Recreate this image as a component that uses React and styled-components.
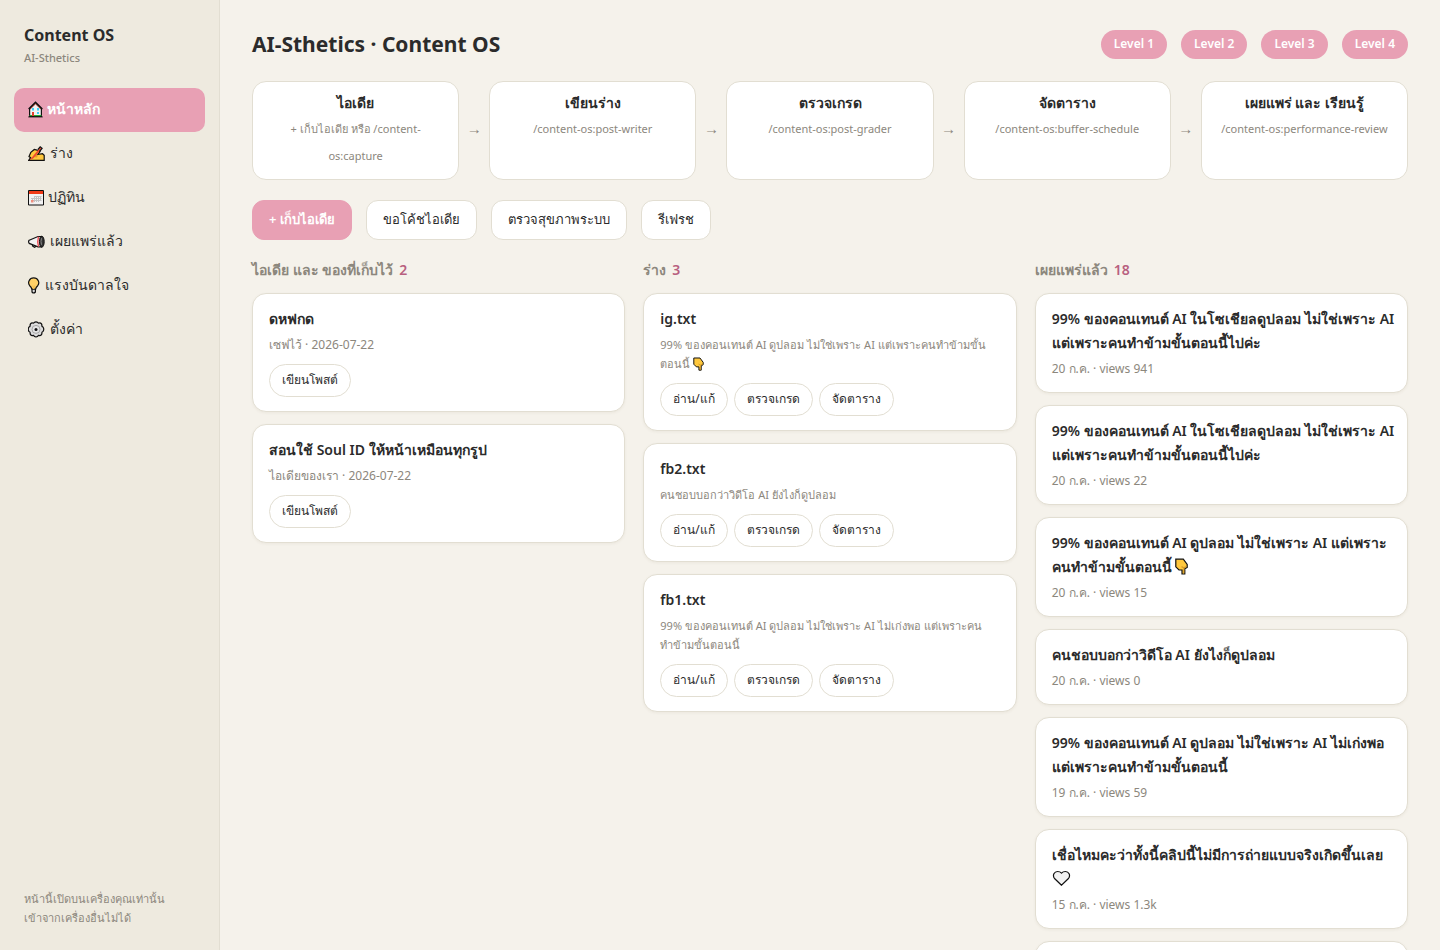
import React from 'react';
import styled, { createGlobalStyle, css } from 'styled-components';

const GlobalStyle = createGlobalStyle`
    * {
        box-sizing: border-box;
    }

    body {
        margin: 0;
        background: #f5f2eb;
        color: #2b2b2b;
        font-family: "Noto Sans", "Open Sans", sans-serif;
        font-size: 15px;
        line-height: 24px;
    }

    button {
        font-family: inherit;
        color: inherit;
        cursor: pointer;
    }
`

const Layout = styled.div`
    display: flex;
    height: 100vh;
    overflow: hidden;
`

const Sidebar = styled.aside`
    display: flex;
    flex-direction: column;
    flex: 0 0 220px;
    padding: 22px 14px;
    background: #eeeadf;
    border-right: 1px solid #e2ded2;
`

const Brand = styled.div`
    padding: 0 10px;
    margin-bottom: 20px;
`

const BrandName = styled.div`
    font-size: 16px;
    font-weight: 700;
    line-height: 26px;
`

const BrandSub = styled.div`
    font-size: 11px;
    font-weight: 500;
    line-height: 20px;
    color: #8c877d;
`

const Nav = styled.nav`
    display: flex;
    flex-direction: column;
`

const NavLink = styled.a`
    display: flex;
    align-items: center;
    gap: 4px;
    height: 44px;
    padding: 0 14px 2px;
    border-radius: 10px;
    font-size: 14px;
    color: #2b2b2b;
    text-decoration: none;
    white-space: nowrap;

    ${props => props.$active && css`
        background: #e8a0b4;
        color: #fff;
        font-weight: 600;
    `}
`

const SideNote = styled.p`
    margin: auto 0 0;
    padding: 0 10px 1px;
    font-size: 11px;
    line-height: 19px;
    color: #8c877d;
    white-space: nowrap;
`

const Main = styled.main`
    flex: 1;
    min-width: 0;
    padding: 28px 32px;
    overflow-y: auto;
    scrollbar-width: none;
`

const TopBar = styled.header`
    display: flex;
    align-items: center;
    justify-content: space-between;
    margin-bottom: 20px;
`

const PageTitle = styled.h1`
    margin: 0;
    font-size: 21px;
    font-weight: 700;
    line-height: 33px;
`

const Levels = styled.div`
    display: flex;
    gap: 14px;
`

const Level = styled.span`
    padding: 0 13px 1px;
    border-radius: 15px;
    background: #e8a0b4;
    color: #fff;
    font-size: 12px;
    font-weight: 600;
    line-height: 28px;
`

const Flow = styled.section`
    display: flex;
    margin-bottom: 20px;
`

const Step = styled.div`
    flex: 1 1 0;
    min-width: 0;
    padding: 9px 14px 10px;
    background: #fff;
    border: 1px solid #e2ded2;
    border-radius: 14px;
    text-align: center;
`

const StepTitle = styled.div`
    margin-bottom: 1px;
    font-size: 14px;
    font-weight: 600;
    line-height: 23px;
`

const StepCommand = styled.div`
    font-size: 11px;
    line-height: 27px;
    color: #8c877d;
`

const Arrow = styled.span`
    display: flex;
    align-items: center;
    justify-content: center;
    flex: 0 0 30px;
    padding-bottom: 5px;
    color: #8c877d;
`

const Actions = styled.div`
    display: flex;
    gap: 14px;
    margin-bottom: 18px;
`

const ActionBtn = styled.button`
    height: 40px;
    padding: 0 16px 2px;
    background: #fff;
    border: 1px solid #e2ded2;
    border-radius: 12px;
    font-size: 13px;

    ${props => props.$primary && css`
        background: #e8a0b4;
        border-color: #e8a0b4;
        color: #fff;
        font-weight: 600;
    `}
`

const Board = styled.div`
    display: grid;
    grid-template-columns: repeat(3, minmax(0, 1fr));
    gap: 18px;
    align-items: start;
`

const Column = styled.section`
    display: flex;
    flex-direction: column;
    gap: 12px;
`

const ColumnTitle = styled.h2`
    margin: 0;
    font-size: 14px;
    font-weight: 600;
    line-height: 23px;
    color: #8c877d;
`

const Count = styled.span`
    margin-left: 6px;
    color: #b8607f;
`

const Card = styled.article`
    min-height: 76px;
    padding: 13px 16px 14px;
    background: #fff;
    border: 1px solid #e2ded2;
    border-radius: 14px;
    box-shadow: 0 1px 3px rgba(80, 70, 40, 0.06);
`

const CardTitle = styled.h3`
    margin: 0 0 4px;
    font-size: 14px;
    font-weight: 600;
    line-height: 24px;
    white-space: nowrap;
`

const Meta = styled.p`
    margin: 0;
    font-size: ${props => props.$excerpt ? '11px' : '12px'};
    line-height: 19px;
    color: #8c877d;
`

const Pills = styled.div`
    display: flex;
    gap: 6px;
    margin-top: 10px;
`

const Pill = styled.button`
    height: 33px;
    padding: 0 12px 2px;
    background: #fff;
    border: 1px solid #e2ded2;
    border-radius: 17px;
    font-size: 12px;
`

const Glyph = styled.svg`
    flex: none;
    vertical-align: -3px;
`

const HomeIcon = () => (
    <Glyph width="15" height="17" viewBox="0 0 15 17" aria-hidden="true">
        <path d="M1.600 8v7.500h11.800V8L7.500 2z" fill="#f4f4f4" stroke="#111" strokeWidth="1.200" />
        <path d="M.600 8 7.500 1.200 14.400 8" fill="none" stroke="#111" strokeWidth="1.300" />
        <path d="M2.300 7.800 7.500 2.800l5.200 5" fill="none" stroke="#a8392c" strokeWidth="1" />
        <path d="M4 7h2v2.500H4zM9 7h2v2.500H9zM9 11h2v2H9z" fill="#3fd0f5" />
        <path d="M4 11h2v4H4z" fill="#e0402c" />
        <path d="M1.500 14.700h2.500M6 14.700h7.500" stroke="#25a833" strokeWidth="1.200" />
        <path d="M.300 15.900h14.400" stroke="#111" strokeWidth="1" />
    </Glyph>
)

const WriteIcon = () => (
    <Glyph width="18" height="17" viewBox="0 0 18 17" aria-hidden="true">
        <path d="M.700 15.300 2.600 12.700 1 11.500 2.800 7.400 6.300 4.500 10 5.300 12 6.700 9.800 9.500 14.500 8.700 16.200 10.300V15.300z" fill="#ffc83d" stroke="#111" strokeWidth="1.200" />
        <path d="M5 12 7.500 9l2.500 1-1 2.500z" fill="#e39d24" />
        <path d="M1.500 15.200 4 12.300 12.300 2.300l1.500 1.200-8.600 9.900z" fill="#ef4b30" />
        <path d="M10 4.500 12.200 1.800l1.900 1.500-2.600 3.200" fill="none" stroke="#111" strokeWidth="1.200" />
    </Glyph>
)

const CalendarIcon = () => (
    <Glyph width="16" height="17" viewBox="0 0 16 17" aria-hidden="true">
        <path d="M.500 1.500h15v14.500H.500z" fill="#f2f2f2" stroke="#111" />
        <path d="M1 2h14v3H1z" fill="#f03a17" />
        <path d="M6 7.500h7.500M3 9.500h10.500M3 11.500h10.500M6.500 7v6M8.500 7v6M10.500 7v6M12.500 7v4.500M4.500 9v4" stroke="#c2c2c2" strokeWidth="1" />
        <path d="M3 11h2.500v2.500H3z" fill="#f0907e" />
    </Glyph>
)

const MegaphoneIcon = () => (
    <Glyph width="18" height="17" viewBox="0 0 18 17" aria-hidden="true">
        <path d="M4.500 11.500v1.500l2 1.200 1.800-1" fill="#ddd" stroke="#111" strokeWidth="1.200" />
        <path d="M1.200 7.200 10 3.500h3.500v10.400H10L1.200 10.400Q0 8.800 1.200 7.200z" fill="#f3f3f3" stroke="#111" strokeWidth="1.200" />
        <path d="M10.500 3.800q-1.500 5 0 9.800" fill="none" stroke="#ef5058" strokeWidth="1.400" />
        <ellipse cx="13.800" cy="8.700" rx="2.400" ry="5.500" fill="#333" stroke="#111" />
        <path d="M13.500 5.200q-1 3.200 0 6.600" fill="none" stroke="#888" />
    </Glyph>
)

const BulbIcon = () => (
    <Glyph width="13" height="17" viewBox="0 0 13 17" aria-hidden="true">
        <path d="M4 12v3q1.700 2 3.400 0v-3z" fill="#d9d9d9" stroke="#111" strokeWidth="1.200" />
        <path d="M3.700 12Q3.600 10.200 1.700 8.700C-.700 5.600 1.200.9 5.700.9s6.400 4.700 4 7.800Q7.800 10.200 7.700 12z" fill="#ffd167" stroke="#111" strokeWidth="1.200" />
        <path d="M4.800 8.500 5.700 12l.9-3.500" fill="none" stroke="#f4bd4c" />
    </Glyph>
)

const GearIcon = () => (
    <Glyph width="18" height="17" viewBox="0 0 18 17" aria-hidden="true">
        <path d="M6.200 1.500Q8 .200 9.800 1.500Q10.600 2.700 11.600 1.900Q13.900 2.200 13.900 4.200Q13.600 5.500 15 6Q16.500 8.300 15 10.500Q13.600 11 13.900 12.300Q13.900 14.400 11.600 14.700Q10.600 13.900 9.800 15.200Q8 16.500 6.200 15.200Q5.400 13.900 4.400 14.700Q2.100 14.400 2.100 12.300Q2.400 11 1 10.500Q-.500 8.300 1 6Q2.400 5.500 2.100 4.200Q2.100 2.200 4.400 1.900Q5.400 2.700 6.200 1.500z" fill="#dcdcdc" stroke="#111" strokeWidth="1.200" />
        <circle cx="8" cy="8.400" r="4" fill="#e4e4e4" stroke="#a5a5a5" />
        <circle cx="8" cy="8.400" r="1.500" fill="#111" />
    </Glyph>
)

const PointDownIcon = ({ small }) => (
    <Glyph width={small ? 11 : 13} height={small ? 14 : 17} viewBox="0 0 13 17" role="img" aria-label="👇">
        <path d="M.800 1.200H8.300L12.200 6.500V9.300L9.800 10.800V16H7V12H4L.800 8.800z" fill="#ffc83d" stroke="#111" strokeWidth="1.200" />
        <path d="M11.400 8.600 8.800 9.800 6.500 8.600" fill="none" stroke="#d59a27" strokeWidth="1.200" />
        <path d="M8.800 10v5.400" stroke="#d59a27" />
    </Glyph>
)

const HeartIcon = () => (
    <Glyph width="19" height="17" viewBox="0 0 19 17" role="img" aria-label="🤍">
        <path d="M9.500 15.200 2.800 8.800C-.200 5.300 2.500 1.500 5.500 1.500q2.600 0 4 1.600 1.400-1.600 4-1.600c3 0 5.700 3.800 2.700 7.300z" fill="#f2f2f2" stroke="#111" strokeWidth="1.200" />
    </Glyph>
)

const navItems = [
    { label: 'หน้าหลัก', Icon: HomeIcon, active: true },
    { label: 'ร่าง', Icon: WriteIcon },
    { label: 'ปฏิทิน', Icon: CalendarIcon },
    { label: 'เผยแพร่แล้ว', Icon: MegaphoneIcon },
    { label: 'แรงบันดาลใจ', Icon: BulbIcon },
    { label: 'ตั้งค่า', Icon: GearIcon },
]

const steps = [
    { title: 'ไอเดีย', command: <>+ เก็บไอเดีย หรือ /content-<br />os:capture</> },
    { title: 'เขียนร่าง', command: '/content-os:post-writer' },
    { title: 'ตรวจเกรด', command: '/content-os:post-grader' },
    { title: 'จัดตาราง', command: '/content-os:buffer-schedule' },
    { title: 'เผยแพร่ และ เรียนรู้', command: '/content-os:performance-review' },
]

const actions = ['+ เก็บไอเดีย', 'ขอโค้ชไอเดีย', 'ตรวจสุขภาพระบบ', 'รีเฟรช']

const ideas = [
    { title: 'ดหฟกด', meta: 'เซฟไว้ · 2026-07-22' },
    { title: 'สอนใช้ Soul ID ให้หน้าเหมือนทุกรูป', meta: 'ไอเดียของเรา · 2026-07-22' },
]

const drafts = [
    { title: 'ig.txt', excerpt: <>99% ของคอนเทนต์ AI ดูปลอม ไม่ใช่เพราะ AI แต่เพราะคนทำข้ามขั้น<br />ตอนนี้ <PointDownIcon small /></> },
    { title: 'fb2.txt', excerpt: 'คนชอบบอกว่าวิดีโอ AI ยังไงก็ดูปลอม' },
    { title: 'fb1.txt', excerpt: <>99% ของคอนเทนต์ AI ดูปลอม ไม่ใช่เพราะ AI ไม่เก่งพอ แต่เพราะคน<br />ทำข้ามขั้นตอนนี้</> },
]

const published = [
    { title: <>99% ของคอนเทนต์ AI ในโซเชียลดูปลอม ไม่ใช่เพราะ AI<br />แต่เพราะคนทำข้ามขั้นตอนนี้ไปค่ะ</>, meta: '20 ก.ค. · views 941' },
    { title: <>99% ของคอนเทนต์ AI ในโซเชียลดูปลอม ไม่ใช่เพราะ AI<br />แต่เพราะคนทำข้ามขั้นตอนนี้ไปค่ะ</>, meta: '20 ก.ค. · views 22' },
    { title: <>99% ของคอนเทนต์ AI ดูปลอม ไม่ใช่เพราะ AI แต่เพราะ<br />คนทำข้ามขั้นตอนนี้ <PointDownIcon /></>, meta: '20 ก.ค. · views 15' },
    { title: 'คนชอบบอกว่าวิดีโอ AI ยังไงก็ดูปลอม', meta: '20 ก.ค. · views 0' },
    { title: <>99% ของคอนเทนต์ AI ดูปลอม ไม่ใช่เพราะ AI ไม่เก่งพอ<br />แต่เพราะคนทำข้ามขั้นตอนนี้</>, meta: '19 ก.ค. · views 59' },
    { title: <>เชื่อไหมคะว่าทั้งนี้คลิปนี้ไม่มีการถ่ายแบบจริงเกิดขึ้นเลย<br /><HeartIcon /></>, meta: '15 ก.ค. · views 1.3k' },
]

const PostCard = ({ post, buttons }) => (
    <Card>
        <CardTitle>{post.title}</CardTitle>
        <Meta $excerpt={!!post.excerpt}>{post.excerpt || post.meta}</Meta>
        {buttons ?
            <Pills>
                {buttons.map(label => <Pill key={label} type="button">{label}</Pill>)}
            </Pills> : null}
    </Card>
)

const App = () => {
    return (
        <>
            <GlobalStyle />
            <Layout>
                <Sidebar>
                    <Brand>
                        <BrandName>Content OS</BrandName>
                        <BrandSub>AI-Sthetics</BrandSub>
                    </Brand>
                    <Nav>
                        {navItems.map(({ label, Icon, active }) => (
                            <NavLink key={label} href="#" $active={active}>
                                <Icon />
                                {label}
                            </NavLink>
                        ))}
                    </Nav>
                    <SideNote>หน้านี้เปิดบนเครื่องคุณเท่านั้น<br />เข้าจากเครื่องอื่นไม่ได้</SideNote>
                </Sidebar>
                <Main>
                    <TopBar>
                        <PageTitle>AI-Sthetics · Content OS</PageTitle>
                        <Levels>
                            {[1, 2, 3, 4].map(n => <Level key={n}>Level {n}</Level>)}
                        </Levels>
                    </TopBar>
                    <Flow>
                        {steps.map((step, i) => (
                            <React.Fragment key={step.title}>
                                {i > 0 ? <Arrow>→</Arrow> : null}
                                <Step>
                                    <StepTitle>{step.title}</StepTitle>
                                    <StepCommand>{step.command}</StepCommand>
                                </Step>
                            </React.Fragment>
                        ))}
                    </Flow>
                    <Actions>
                        {actions.map((label, i) => (
                            <ActionBtn key={label} type="button" $primary={i === 0}>{label}</ActionBtn>
                        ))}
                    </Actions>
                    <Board>
                        <Column>
                            <ColumnTitle>ไอเดีย และ ของที่เก็บไว้<Count>2</Count></ColumnTitle>
                            {ideas.map(post => <PostCard key={post.title} post={post} buttons={['เขียนโพสต์']} />)}
                        </Column>
                        <Column>
                            <ColumnTitle>ร่าง<Count>3</Count></ColumnTitle>
                            {drafts.map(post => <PostCard key={post.title} post={post} buttons={['อ่าน/แก้', 'ตรวจเกรด', 'จัดตาราง']} />)}
                        </Column>
                        <Column>
                            <ColumnTitle>เผยแพร่แล้ว<Count>18</Count></ColumnTitle>
                            {published.map(post => <PostCard key={post.meta} post={post} />)}
                            <Card />
                        </Column>
                    </Board>
                </Main>
            </Layout>
        </>
    );
}

export default App;
